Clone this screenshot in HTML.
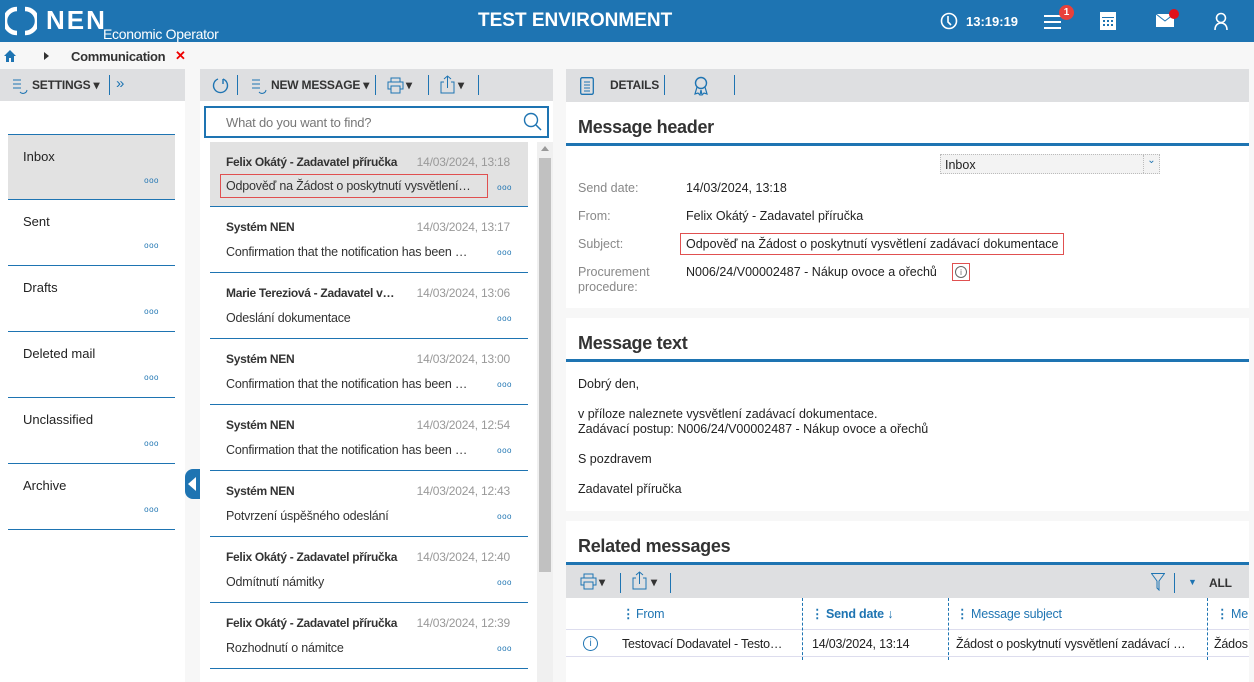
<!DOCTYPE html>
<html><head><meta charset="utf-8"><style>
*{box-sizing:border-box;margin:0;padding:0}
body{width:1254px;height:682px;overflow:hidden;background:#f7f7f7;font-family:"Liberation Sans",sans-serif;color:#222;font-size:13px;position:relative}
.a{position:absolute}
.hdr{left:0;top:0;width:1254px;height:42px;background:#1e74b2;color:#fff}
.tb{background:#dedfe1;height:32px}
.tbt{font-weight:bold;font-size:12px;color:#333;top:9px;letter-spacing:-0.2px}
.sep{width:1px;height:20px;background:#1e74b2;top:6px}
.fold{left:8px;width:167px;height:66px;border-bottom:1px solid #1e74b2;background:#fff}
.fold span{position:absolute;left:15px;top:14px;font-size:13px}
.dots{color:#1e74b2;font-size:8px;letter-spacing:0.5px;position:absolute;font-style:normal}
.msg{left:210px;width:318px;height:66px;border-bottom:1px solid #1e74b2;background:#fff}
.msg .n{position:absolute;left:16px;top:13px;font-weight:bold;font-size:12px;color:#333;letter-spacing:-0.3px}
.msg .d{position:absolute;right:18px;top:13px;color:#999;font-size:12px;letter-spacing:-0.2px}
.msg .s{position:absolute;left:16px;top:38px;font-size:12.5px;color:#333;white-space:nowrap;letter-spacing:-0.2px}
.msg .dots{right:16px;top:41px}
.card{background:#fff;left:566px;width:683px}
.card h2{position:absolute;left:12px;top:15px;font-size:18px;font-weight:bold;color:#333;letter-spacing:-0.3px}
.bl{position:absolute;left:0;width:683px;height:3px;background:#1e74b2}
.lab{color:#888;font-size:12.5px;left:12px}
.val{font-size:12.5px;left:120px;color:#222}
</style></head><body>
<div class="a hdr">
 <svg class="a" style="left:5px;top:5px" width="32" height="32" viewBox="0 0 32 32"><path d="M12 4A12 12 0 0 0 12 28" fill="none" stroke="#fff" stroke-width="4.5"/><path d="M20 4A12 12 0 0 1 20 28" fill="none" stroke="#fff" stroke-width="4.5"/></svg>
 <div class="a" style="left:46px;top:5px;font-size:26px;font-weight:bold;letter-spacing:2px">NEN</div>
 <div class="a" style="left:103px;top:26px;font-size:14px;letter-spacing:-0.3px">Economic Operator</div>
 <div class="a" style="left:478px;top:10px;font-size:19px;font-weight:bold">TEST ENVIRONMENT</div>
 <svg class="a" style="left:940px;top:12px" width="18" height="18"><circle cx="9" cy="9" r="7.5" fill="none" stroke="#fff" stroke-width="1.6"/><path d="M8 4v6l3 3" stroke="#fff" fill="none" stroke-width="1.6"/></svg>
 <div class="a" style="left:966px;top:14px;font-size:13px;font-weight:bold">13:19:19</div>
 <svg class="a" style="left:1044px;top:13px" width="18" height="18"><path d="M0 3h17M0 9h17M0 15h17" stroke="#fff" stroke-width="2"/></svg>
 <div class="a" style="left:1059px;top:5px;width:15px;height:15px;border-radius:50%;background:#e8403a;font-size:10px;font-weight:bold;text-align:center;line-height:15px">1</div>
 <svg class="a" style="left:1100px;top:12px" width="16" height="18"><rect x="0" y="0" width="16" height="18" fill="#fff"/><rect x="2" y="5" width="12" height="1" fill="#1e74b2"/><g fill="#1e74b2"><rect x="3" y="8" width="2" height="2"/><rect x="7" y="8" width="2" height="2"/><rect x="11" y="8" width="2" height="2"/><rect x="3" y="12" width="2" height="2"/><rect x="7" y="12" width="2" height="2"/><rect x="11" y="12" width="2" height="2"/></g></svg>
 <svg class="a" style="left:1156px;top:14px" width="20" height="14"><rect width="18" height="13" fill="#fff"/><path d="M0 0l9 7 9-7" stroke="#1e74b2" fill="none"/></svg>
 <div class="a" style="left:1169px;top:9px;width:10px;height:10px;border-radius:50%;background:#e0101a"></div>
 <svg class="a" style="left:1213px;top:12px" width="16" height="18"><circle cx="8" cy="6" r="4.5" fill="none" stroke="#fff" stroke-width="1.6"/><path d="M2 18c0-5 3-7 6-7s6 2 6 7" fill="none" stroke="#fff" stroke-width="1.6"/></svg>
</div>
<svg class="a" style="left:4px;top:50px" width="12" height="12"><path d="M6 0L0 6h2v6h3V8h2v4h3V6h2z" fill="#1e74b2"/></svg>
<div class="a" style="left:44px;top:52px;width:0;height:0;border-left:5px solid #333;border-top:4px solid transparent;border-bottom:4px solid transparent"></div>
<div class="a" style="left:71px;top:49px;font-size:13px;font-weight:bold;color:#333;letter-spacing:-0.3px">Communication</div>
<div class="a" style="left:175px;top:48px;font-size:13px;font-weight:bold;color:#e00">✕</div>

<!-- left -->
<div class="a tb" style="left:0;top:69px;width:185px"></div>
<svg class="a" style="left:12px;top:78px" width="16" height="16"><path d="M1 2h8M1 6h8M1 10h8" stroke="#1e74b2"/><path d="M8 14a4 4 0 0 0 7-2" fill="none" stroke="#1e74b2"/></svg>
<div class="a tbt" style="left:32px;top:78px">SETTINGS ▾</div>
<div class="a sep" style="left:109px;top:75px"></div>
<div class="a" style="left:116px;top:75px;color:#1e74b2;font-size:15px">»</div>
<div class="a" style="left:0;top:101px;width:185px;height:581px;background:#fff"></div>
<div class="a fold" style="top:134px;background:#e2e2e2;border-top:1px solid #1e74b2"><span>Inbox</span><i class="dots" style="right:16px;top:41px">ooo</i></div>
<div class="a fold" style="top:200px"><span>Sent</span><i class="dots" style="right:16px;top:41px">ooo</i></div>
<div class="a fold" style="top:266px"><span>Drafts</span><i class="dots" style="right:16px;top:41px">ooo</i></div>
<div class="a fold" style="top:332px"><span>Deleted mail</span><i class="dots" style="right:16px;top:41px">ooo</i></div>
<div class="a fold" style="top:398px"><span>Unclassified</span><i class="dots" style="right:16px;top:41px">ooo</i></div>
<div class="a fold" style="top:464px"><span>Archive</span><i class="dots" style="right:16px;top:41px">ooo</i></div>
<div class="a" style="left:185px;top:469px;width:15px;height:30px;background:#1e74b2;border-radius:8px 0 0 8px"></div>
<div class="a" style="left:188px;top:477px;width:0;height:0;border-right:8px solid #fff;border-top:7px solid transparent;border-bottom:7px solid transparent"></div>

<!-- middle -->
<div class="a tb" style="left:200px;top:69px;width:353px"></div>
<svg class="a" style="left:212px;top:76px" width="18" height="18"><path d="M6 3A7 7 0 1 0 11 3" fill="none" stroke="#1e74b2" stroke-width="1.4"/><path d="M11 3v5" stroke="#1e74b2" stroke-width="1.4"/></svg>
<div class="a sep" style="left:237px;top:75px"></div>
<svg class="a" style="left:251px;top:78px" width="16" height="16"><path d="M1 2h8M1 6h8M1 10h8" stroke="#1e74b2"/><path d="M8 14a4 4 0 0 0 7-2" fill="none" stroke="#1e74b2"/></svg>
<div class="a tbt" style="left:271px;top:78px">NEW MESSAGE ▾</div>
<div class="a sep" style="left:375px;top:75px"></div>
<svg class="a" style="left:387px;top:77px" width="17" height="17"><rect x="4" y="1" width="9" height="4" fill="none" stroke="#1e74b2"/><rect x="1" y="5" width="15" height="7" fill="none" stroke="#1e74b2"/><rect x="4" y="9" width="9" height="7" fill="#dedfe1" stroke="#1e74b2"/></svg><div class="a tbt" style="left:406px;top:78px">▾</div>
<div class="a sep" style="left:428px;top:75px"></div>
<svg class="a" style="left:440px;top:75px" width="15" height="19"><path d="M4 7H1v11h13V7h-3M7.5 13V1M4 4l3.5-3 3.5 3" fill="none" stroke="#1e74b2"/></svg><div class="a tbt" style="left:458px;top:78px">▾</div>
<div class="a sep" style="left:478px;top:75px"></div>
<div class="a" style="left:200px;top:101px;width:353px;height:581px;background:#fff"></div>
<div class="a" style="left:204px;top:106px;width:345px;height:32px;border:2px solid #1e74b2;background:#fff"></div>
<div class="a" style="left:226px;top:115px;color:#777;font-size:13px;letter-spacing:-0.2px">What do you want to find?</div>
<svg class="a" style="left:523px;top:112px" width="20" height="20"><circle cx="8" cy="8" r="6.5" fill="none" stroke="#1e74b2" stroke-width="1.4"/><path d="M13 13l5 5" stroke="#1e74b2" stroke-width="1.5"/></svg>
<div class="a" style="left:537px;top:142px;width:16px;height:540px;background:#f0f0f0"></div>
<div class="a" style="left:539px;top:158px;width:12px;height:414px;background:#c1c1c1"></div>
<div class="a" style="left:541px;top:146px;width:0;height:0;border-bottom:5px solid #999;border-left:4px solid transparent;border-right:4px solid transparent"></div>

<div class="a msg" style="top:142px;background:#e2e2e2;height:65px"><span class="n">Felix Okátý - Zadavatel příručka</span><span class="d">14/03/2024, 13:18</span><span class="s" style="left:10px;top:32px;border:1.5px solid #e05050;padding:4px 5px;width:268px;overflow:hidden">Odpověď na Žádost o poskytnutí vysvětlení…</span><i class="dots">ooo</i></div>
<div class="a msg" style="top:207px"><span class="n">Systém NEN</span><span class="d">14/03/2024, 13:17</span><span class="s">Confirmation that the notification has been …</span><i class="dots">ooo</i></div>
<div class="a msg" style="top:273px"><span class="n">Marie Tereziová - Zadavatel v…</span><span class="d">14/03/2024, 13:06</span><span class="s">Odeslání dokumentace</span><i class="dots">ooo</i></div>
<div class="a msg" style="top:339px"><span class="n">Systém NEN</span><span class="d">14/03/2024, 13:00</span><span class="s">Confirmation that the notification has been …</span><i class="dots">ooo</i></div>
<div class="a msg" style="top:405px"><span class="n">Systém NEN</span><span class="d">14/03/2024, 12:54</span><span class="s">Confirmation that the notification has been …</span><i class="dots">ooo</i></div>
<div class="a msg" style="top:471px"><span class="n">Systém NEN</span><span class="d">14/03/2024, 12:43</span><span class="s">Potvrzení úspěšného odeslání</span><i class="dots">ooo</i></div>
<div class="a msg" style="top:537px"><span class="n">Felix Okátý - Zadavatel příručka</span><span class="d">14/03/2024, 12:40</span><span class="s">Odmítnutí námitky</span><i class="dots">ooo</i></div>
<div class="a msg" style="top:603px"><span class="n">Felix Okátý - Zadavatel příručka</span><span class="d">14/03/2024, 12:39</span><span class="s">Rozhodnutí o námitce</span><i class="dots">ooo</i></div>

<!-- right -->
<div class="a tb" style="left:566px;top:69px;width:683px;height:33px"></div>
<svg class="a" style="left:580px;top:77px" width="14" height="18"><rect x="0.7" y="0.7" width="12.6" height="16.6" rx="1.5" fill="none" stroke="#1e74b2" stroke-width="1.3"/><path d="M4 5h6M4 8h6M4 11h6M4 14h6" stroke="#1e74b2"/></svg>
<div class="a tbt" style="left:610px;top:78px">DETAILS</div>
<div class="a sep" style="left:664px;top:75px"></div>
<svg class="a" style="left:693px;top:76px" width="16" height="20"><circle cx="8" cy="7" r="5.5" fill="none" stroke="#1e74b2" stroke-width="1.4"/><path d="M4 11l-2 7 3-1 2 2 1-5M12 11l2 7-3-1-2 2-1-5" fill="none" stroke="#1e74b2" stroke-width="1.2"/></svg>
<div class="a sep" style="left:734px;top:75px"></div>

<div class="a card" style="top:102px;height:206px"><h2>Message header</h2><div class="bl" style="top:41px"></div>
 <div class="a" style="left:374px;top:52px;width:220px;height:20px;background:#f3f3f3;border:1px dotted #bbb;font-size:12.5px;padding:3px 4px">Inbox<span style="position:absolute;right:0;top:0;width:16px;height:18px;border-left:1px dotted #bbb;color:#1e74b2;font-size:10px;text-align:center">⌄</span></div>
 <div class="a lab" style="top:79px">Send date:</div><div class="a val" style="top:79px">14/03/2024, 13:18</div>
 <div class="a lab" style="top:107px">From:</div><div class="a val" style="top:107px">Felix Okátý - Zadavatel příručka</div>
 <div class="a lab" style="top:135px">Subject:</div><div class="a val" style="top:131px;left:114px;border:1.5px solid #e05050;padding:3px 5px">Odpověď na Žádost o poskytnutí vysvětlení zadávací dokumentace</div>
 <div class="a lab" style="top:163px;line-height:15px">Procurement<br>procedure:</div><div class="a val" style="top:163px">N006/24/V00002487 - Nákup ovoce a ořechů</div>
 <div class="a" style="left:386px;top:161px;width:18px;height:18px;border:1.5px solid #e05050"></div>
 <div class="a" style="left:389px;top:164px;width:12px;height:12px;border:1px solid #666;border-radius:50%;font-size:8px;text-align:center;line-height:11px;color:#666">i</div>
</div>

<div class="a card" style="top:318px;height:193px"><h2>Message text</h2><div class="bl" style="top:41px"></div>
 <div class="a" style="left:12px;top:59px;font-size:12.5px;line-height:15px">Dobrý den,<br><br>v příloze naleznete vysvětlení zadávací dokumentace.<br>Zadávací postup: N006/24/V00002487 - Nákup ovoce a ořechů<br><br>S pozdravem<br><br>Zadavatel příručka</div>
</div>

<div class="a card" style="top:521px;height:161px"><h2>Related messages</h2><div class="bl" style="top:41px"></div>
 <div class="a tb" style="left:0;top:44px;width:683px;height:33px"></div>
 <svg class="a" style="left:14px;top:52px" width="17" height="17"><rect x="4" y="1" width="9" height="4" fill="none" stroke="#1e74b2"/><rect x="1" y="5" width="15" height="7" fill="none" stroke="#1e74b2"/><rect x="4" y="9" width="9" height="7" fill="#dedfe1" stroke="#1e74b2"/></svg><div class="a tbt" style="left:33px;top:54px">▾</div>
 <div class="a sep" style="left:54px;top:52px"></div>
 <svg class="a" style="left:66px;top:50px" width="15" height="19"><path d="M4 7H1v11h13V7h-3M7.5 13V1M4 4l3.5-3 3.5 3" fill="none" stroke="#1e74b2"/></svg><div class="a tbt" style="left:85px;top:54px">▾</div>
 <div class="a sep" style="left:104px;top:52px"></div>
 <svg class="a" style="left:585px;top:52px" width="14" height="18"><path d="M0.5 0.5h13L8 8v9l-2-2V8z" fill="none" stroke="#1e74b2"/></svg>
 <div class="a sep" style="left:608px;top:52px"></div>
 <div class="a tbt" style="left:622px;top:56px;color:#1e74b2;font-size:9px">▼</div>
 <div class="a tbt" style="left:643px;top:55px">ALL</div>
 <div class="a" style="left:0;top:77px;width:683px;height:32px;border-bottom:1px solid #dde;color:#1e74b2;font-size:12.5px;letter-spacing:-0.2px">
  <span class="a" style="left:56px;top:8px;font-weight:bold">⋮</span><span class="a" style="left:70px;top:9px">From</span>
  <span class="a" style="left:236px;top:0;height:62px;border-left:1px dashed #1e74b2"></span>
  <span class="a" style="left:245px;top:8px;font-weight:bold">⋮</span><span class="a" style="left:260px;top:9px;font-weight:bold">Send date ↓</span>
  <span class="a" style="left:382px;top:0;height:62px;border-left:1px dashed #1e74b2"></span>
  <span class="a" style="left:390px;top:8px;font-weight:bold">⋮</span><span class="a" style="left:405px;top:9px">Message subject</span>
  <span class="a" style="left:641px;top:0;height:62px;border-left:1px dashed #1e74b2"></span>
  <span class="a" style="left:650px;top:8px;font-weight:bold">⋮</span><span class="a" style="left:665px;top:9px">Me</span>
 </div>
 <div class="a" style="left:0;top:110px;width:683px;height:26px;border-bottom:1px solid #dde;font-size:12.5px;letter-spacing:-0.2px">
  <span class="a" style="left:17px;top:5px;width:15px;height:15px;border:1px solid #1e74b2;border-radius:50%;color:#1e74b2;font-size:10px;text-align:center;line-height:13px">i</span>
  <span class="a" style="left:56px;top:6px">Testovací Dodavatel - Testo…</span>
  <span class="a" style="left:246px;top:6px">14/03/2024, 13:14</span>
  <span class="a" style="left:390px;top:6px">Žádost o poskytnutí vysvětlení zadávací …</span>
  <span class="a" style="left:648px;top:6px">Žádos</span>
 </div>
</div>
</body></html>
